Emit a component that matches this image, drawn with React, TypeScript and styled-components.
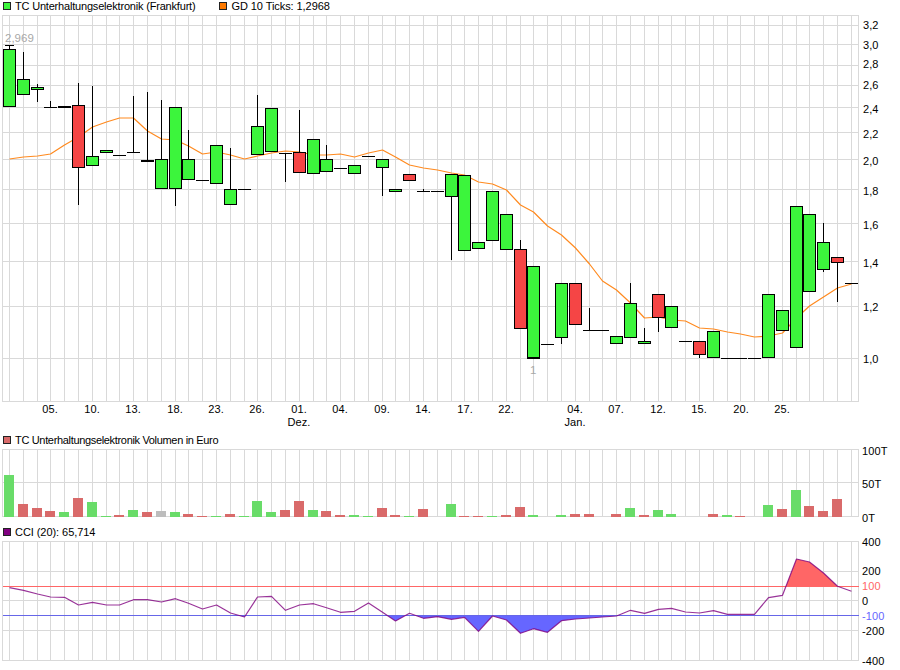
import React from "react";
import styled, { createGlobalStyle } from "styled-components";

const GlobalStyle = createGlobalStyle`
  html, body { margin: 0; padding: 0; background: #fff; }
  body { font-family: "Liberation Sans", Arial, sans-serif; }
`;

const Page = styled.div`
  width: 900px;
  height: 670px;
  display: flex;
  flex-direction: column;
  background: #fff;
  overflow: hidden;
`;

const LegendRow = styled.div<{ $height: number; $top: number }>`
  height: ${(p) => p.$height}px;
  box-sizing: border-box;
  padding: ${(p) => p.$top}px 0 0 3px;
  display: flex;
  align-items: flex-start;
  gap: 24px;
  flex: none;
`;

const LegendItem = styled.div`
  display: flex;
  align-items: center;
  gap: 4px;
`;

const Swatch = styled.span<{ $color: string }>`
  width: 8px;
  height: 8px;
  box-sizing: border-box;
  background: ${(p) => p.$color};
  border: 1px solid #222;
  flex: none;
`;

const LegendLabel = styled.span<{ $spacing: number }>`
  font-size: 11px;
  line-height: 12px;
  letter-spacing: ${(p) => p.$spacing}px;
  color: #000;
  white-space: nowrap;
`;

const ChartSvg = styled.svg`
  display: block;
  flex: none;
  overflow: visible;
`;

const GridLine = styled.line`
  stroke: #d9d9d9;
  stroke-width: 1;
  shape-rendering: crispEdges;
`;

const LevelLine = styled.line<{ $color: string }>`
  stroke: ${(p) => p.$color};
  stroke-width: 1;
  shape-rendering: crispEdges;
`;

const Wick = styled.line<{ $w?: number }>`
  stroke: #000;
  stroke-width: ${(p) => p.$w ?? 1};
  shape-rendering: crispEdges;
`;

const Body = styled.rect<{ $color: string }>`
  fill: ${(p) => p.$color};
  stroke: #000;
  stroke-width: 1;
  shape-rendering: crispEdges;
`;

const VolumeBar = styled.rect<{ $color: string }>`
  fill: ${(p) => p.$color};
  shape-rendering: crispEdges;
`;

const TrendLine = styled.polyline<{ $color: string; $opacity?: number }>`
  fill: none;
  stroke: ${(p) => p.$color};
  stroke-width: 1.2;
  stroke-opacity: ${(p) => p.$opacity ?? 1};
  stroke-linejoin: round;
`;

const AreaFill = styled.path<{ $color: string }>`
  fill: ${(p) => p.$color};
  stroke: none;
`;

const AxisText = styled.text<{ $color?: string }>`
  font-family: "Liberation Sans", Arial, sans-serif;
  font-size: 11px;
  letter-spacing: 0.1px;
  fill: ${(p) => p.$color ?? "#000"};
`;

const NoteText = styled.text`
  font-family: "Liberation Sans", Arial, sans-serif;
  font-size: 11.5px;
  fill: #a8a8a8;
`;

const GREEN = "#3cf53c";
const RED = "#f54545";
const LEFT = 2.5;
const RIGHT = 858.5;
const gx = (i: number) => Math.floor(9.5 + 13.8 * i) + 0.5;
const SLOTS = Array.from({ length: 62 }, (_, i) => i);

type Candle = { i: number; c: "g" | "r" | "d"; t: number; b: number; wt?: number; wb?: number; thick?: boolean };

const candles: Candle[] = [
  { i: 0, c: "g", t: 49, b: 107, wt: 45 },
  { i: 1, c: "g", t: 79, b: 95, wt: 52 },
  { i: 2, c: "g", t: 87, b: 90, wt: 84, wb: 102 },
  { i: 3, c: "d", t: 107, b: 107, wt: 101 },
  { i: 4, c: "d", t: 106, b: 106, thick: true },
  { i: 5, c: "r", t: 105, b: 168, wt: 83, wb: 205 },
  { i: 6, c: "g", t: 156, b: 166, wt: 86 },
  { i: 7, c: "g", t: 150, b: 153 },
  { i: 8, c: "d", t: 155, b: 155 },
  { i: 9, c: "d", t: 152, b: 152, wt: 96 },
  { i: 10, c: "d", t: 160, b: 160, wt: 92, thick: true },
  { i: 11, c: "g", t: 159, b: 189, wt: 100 },
  { i: 12, c: "g", t: 107, b: 189, wb: 206 },
  { i: 13, c: "g", t: 159, b: 180, wt: 130 },
  { i: 14, c: "d", t: 180, b: 180 },
  { i: 15, c: "g", t: 145, b: 184 },
  { i: 16, c: "g", t: 189, b: 205, wt: 148 },
  { i: 17, c: "d", t: 189, b: 189 },
  { i: 18, c: "g", t: 126, b: 155, wt: 95 },
  { i: 19, c: "g", t: 108, b: 152 },
  { i: 20, c: "d", t: 153, b: 153, wb: 182 },
  { i: 21, c: "r", t: 152, b: 173, wt: 110 },
  { i: 22, c: "g", t: 139, b: 174 },
  { i: 23, c: "g", t: 159, b: 172, wt: 145 },
  { i: 24, c: "d", t: 168, b: 168 },
  { i: 25, c: "g", t: 165, b: 174 },
  { i: 26, c: "d", t: 156, b: 156 },
  { i: 27, c: "g", t: 159, b: 168, wb: 196 },
  { i: 28, c: "g", t: 189, b: 192 },
  { i: 29, c: "r", t: 174, b: 181 },
  { i: 30, c: "d", t: 191, b: 191, wt: 189 },
  { i: 31, c: "d", t: 191, b: 191 },
  { i: 32, c: "g", t: 174, b: 197, wb: 260 },
  { i: 33, c: "g", t: 175, b: 251 },
  { i: 34, c: "g", t: 242, b: 249 },
  { i: 35, c: "g", t: 191, b: 241 },
  { i: 36, c: "g", t: 214, b: 250 },
  { i: 37, c: "r", t: 249, b: 329, wt: 240 },
  { i: 38, c: "g", t: 266, b: 359 },
  { i: 39, c: "d", t: 344, b: 344 },
  { i: 40, c: "g", t: 283, b: 338, wb: 344 },
  { i: 41, c: "r", t: 283, b: 325 },
  { i: 42, c: "d", t: 330, b: 330, wt: 308 },
  { i: 43, c: "d", t: 330, b: 330 },
  { i: 44, c: "g", t: 336, b: 344 },
  { i: 45, c: "g", t: 303, b: 338, wt: 283 },
  { i: 46, c: "g", t: 341, b: 344, wt: 328 },
  { i: 47, c: "r", t: 294, b: 318, wb: 332 },
  { i: 48, c: "g", t: 306, b: 328 },
  { i: 49, c: "d", t: 341, b: 341 },
  { i: 50, c: "r", t: 341, b: 355, wb: 358 },
  { i: 51, c: "g", t: 331, b: 358 },
  { i: 52, c: "d", t: 358, b: 358 },
  { i: 53, c: "d", t: 358, b: 358 },
  { i: 54, c: "d", t: 358, b: 358 },
  { i: 55, c: "g", t: 294, b: 358 },
  { i: 56, c: "g", t: 310, b: 331 },
  { i: 57, c: "g", t: 206, b: 348 },
  { i: 58, c: "g", t: 214, b: 292 },
  { i: 59, c: "g", t: 242, b: 270, wt: 223, wb: 272 },
  { i: 60, c: "r", t: 257, b: 263, wb: 302 },
  { i: 61, c: "d", t: 283, b: 283 },
];

const ma = [
  159, 157, 156, 154, 145, 137, 127, 122, 118, 118, 131, 139, 140, 146, 154, 152, 155, 159, 156, 153, 151, 152,
  155, 155, 154, 157, 153, 150, 157, 165, 168, 170, 173, 175, 182, 184, 190, 205, 212, 226, 235, 248, 264, 281,
  290, 303, 318, 317, 320, 321, 328, 329, 332, 334, 337, 336, 333, 318, 306, 297, 288, 284,
];

const volumes: [number, "g" | "r" | "x"][] = [
  [135, "g"], [222, "r"], [234, "r"], [243, "r"], [246, "g"], [204, "r"], [216, "g"], [258, "g"], [255, "r"],
  [240, "g"], [246, "r"], [243, "x"], [246, "g"], [252, "r"], [258, "r"], [258, "g"], [252, "r"], [258, "g"],
  [213, "g"], [246, "g"], [240, "r"], [213, "r"], [240, "g"], [243, "r"], [255, "r"], [255, "g"], [258, "g"],
  [234, "r"], [255, "r"], [258, "g"], [237, "r"], [261, "g"], [222, "g"], [258, "r"], [258, "r"], [258, "g"],
  [255, "r"], [231, "r"], [255, "g"], [261, "g"], [255, "g"], [252, "r"], [252, "r"], [261, "g"], [252, "r"],
  [234, "g"], [255, "r"], [240, "g"], [252, "g"], [261, "g"], [261, "g"], [252, "r"], [255, "g"], [258, "r"],
  [261, "g"], [225, "g"], [237, "r"], [180, "g"], [228, "r"], [243, "r"], [207, "r"], [261, "g"],
];

const cci3x = [
  473, 481, 492, 501, 502, 525, 517, 525, 525, 509, 509, 516, 506, 520, 537, 525, 549, 561, 501, 499, 541, 525,
  521, 533, 547, 544, 519, 547, 573, 550, 565, 560, 568, 562, 604, 558, 570, 610, 596, 607, 572, 567, 564, 561,
  558, 541, 550, 538, 535, 546, 549, 542, 553, 553, 553, 503, 496, 387, 396, 429, 469, 484,
];
const cciY = (v: number) => 430 + v / 3;
const cciPoints = cci3x.map((v, i) => `${gx(i)},${cciY(v).toFixed(1)}`).join(" ");

const priceH = [25, 44, 65, 85, 107, 132, 159, 189, 223, 261, 306, 358];
const priceLabels: [string, number][] = [
  ["3,2", 24], ["3,0", 44], ["2,8", 63], ["2,6", 84], ["2,4", 108], ["2,2", 133],
  ["2,0", 160], ["1,8", 190], ["1,6", 224], ["1,4", 262], ["1,2", 306], ["1,0", 358],
];
const dateLabels: [string, number, string?][] = [
  ["05.", 50], ["10.", 92], ["13.", 133], ["18.", 175], ["23.", 216], ["26.", 257], ["01.", 299, "Dez."],
  ["04.", 340], ["09.", 382], ["14.", 423], ["17.", 465], ["22.", 506], ["04.", 575, "Jan."], ["07.", 616],
  ["12.", 658], ["15.", 699], ["20.", 741], ["25.", 782],
];
const cciLabels: [string, number, string?][] = [
  ["400", 542], ["200", 571], ["100", 586, "#ff6666"], ["0", 601], ["-100", 615.5, "#6666ff"], ["-200", 631], ["-400", 661],
];

const VGrid = ({ top, bottom }: { top: number; bottom: number }) => (
  <>
    <GridLine x1={LEFT} x2={LEFT} y1={top} y2={bottom} />
    <GridLine x1={RIGHT} x2={RIGHT} y1={top} y2={bottom} />
    {SLOTS.map((i) => (
      <GridLine key={i} x1={gx(i)} x2={gx(i)} y1={top} y2={bottom} />
    ))}
  </>
);

const HGrid = ({ ys }: { ys: number[] }) => (
  <>
    {ys.map((y) => (
      <GridLine key={y} x1={LEFT} x2={RIGHT} y1={y + 0.5} y2={y + 0.5} />
    ))}
  </>
);

const CandleMark = ({ d }: { d: Candle }) => {
  const x = gx(d.i);
  if (d.c === "d") {
    const w = d.thick ? 2 : 1;
    return (
      <>
        {d.wt !== undefined && <Wick x1={x} x2={x} y1={d.wt} y2={d.t} />}
        {d.wb !== undefined && <Wick x1={x} x2={x} y1={d.t} y2={d.wb} />}
        <Wick $w={w} x1={x - 6.5} x2={x + 6.5} y1={d.t + 0.5} y2={d.t + 0.5} />
      </>
    );
  }
  return (
    <>
      {d.wt !== undefined && <Wick x1={x} x2={x} y1={d.wt} y2={d.t} />}
      {d.wb !== undefined && <Wick x1={x} x2={x} y1={d.b} y2={d.wb} />}
      <Body $color={d.c === "g" ? GREEN : RED} x={x - 6} y={d.t + 0.5} width={12} height={Math.max(d.b - d.t - 1, 1)} />
    </>
  );
};

const PriceChart = () => (
  <ChartSvg width={900} height={420} viewBox="0 12 900 420">
    <HGrid ys={[15, ...priceH, 401]} />
    <VGrid top={15} bottom={401.5} />
    <TrendLine $color="#ff8a1f" points={ma.map((y, i) => `${gx(i)},${y}`).join(" ")} />
    <Wick x1={5} x2={14} y1={45.5} y2={45.5} />
    {candles.map((d) => (
      <CandleMark key={d.i} d={d} />
    ))}
    <Wick x1={gx(38) - 6} x2={gx(38) + 6} y1={357.5} y2={357.5} />
    <NoteText x={5} y={42}>2,969</NoteText>
    <NoteText x={530} y={374}>1</NoteText>
    {priceLabels.map(([t, y]) => (
      <AxisText key={t} x={863} y={y + 5}>{t}</AxisText>
    ))}
    {dateLabels.map(([t, x, m]) => (
      <React.Fragment key={`${t}${x}`}>
        <AxisText x={x} y={413} textAnchor="middle">{t}</AxisText>
        {m && <AxisText x={x} y={426} textAnchor="middle">{m}</AxisText>}
      </React.Fragment>
    ))}
  </ChartSvg>
);

const volumeColor = { g: "#69dc69", r: "#d96a6a", x: "#bdbdbd" };

const VolumeChart = () => (
  <ChartSvg width={900} height={80} viewBox="0 446 900 80">
    <HGrid ys={[449, 482, 516]} />
    <VGrid top={449} bottom={517} />
    {volumes.map(([v, c], i) =>
      v >= 261 ? null : (
        <VolumeBar key={i} $color={volumeColor[c]} x={gx(i) - 5.5} y={430 + v / 3} width={10} height={517 - (430 + v / 3)} />
      ),
    )}
    <AxisText x={862} y={455}>100T</AxisText>
    <AxisText x={862} y={488}>50T</AxisText>
    <AxisText x={862} y={522}>0T</AxisText>
  </ChartSvg>
);

const CciChart = () => (
  <ChartSvg width={900} height={130} viewBox="0 540 900 130">
    <defs>
      <clipPath id="overbought"><rect x={0} y={500} width={900} height={86.5} /></clipPath>
      <clipPath id="oversold"><rect x={0} y={615.5} width={900} height={60} /></clipPath>
    </defs>
    <HGrid ys={[541, 571, 600, 630, 660]} />
    <VGrid top={541} bottom={660.5} />
    <g clipPath="url(#oversold)">
      <AreaFill $color="#6666ff" d={`M${gx(0)},615.5 L${cciPoints.replace(/ /g, " L")} L${gx(61)},615.5 Z`} />
    </g>
    <g clipPath="url(#overbought)">
      <AreaFill $color="#ff6666" d={`M${gx(0)},586.5 L${cciPoints.replace(/ /g, " L")} L${gx(61)},586.5 Z`} />
    </g>
    <LevelLine $color="#ff6666" x1={LEFT} x2={RIGHT} y1={586.5} y2={586.5} />
    <LevelLine $color="#6666e8" x1={LEFT} x2={RIGHT} y1={615.5} y2={615.5} />
    <TrendLine $color="#800080" $opacity={0.8} points={cciPoints} />
    {cciLabels.map(([t, y, c]) => (
      <AxisText key={t} x={862} y={y + 4} $color={c}>{t}</AxisText>
    ))}
  </ChartSvg>
);

export default function App() {
  return (
    <Page>
      <GlobalStyle />
      <LegendRow $height={12} $top={0}>
        <LegendItem>
          <Swatch $color={GREEN} />
          <LegendLabel $spacing={-0.19}>TC Unterhaltungselektronik (Frankfurt)</LegendLabel>
        </LegendItem>
        <LegendItem>
          <Swatch $color="#ff7a00" />
          <LegendLabel $spacing={-0.07}>GD 10 Ticks: 1,2968</LegendLabel>
        </LegendItem>
      </LegendRow>
      <PriceChart />
      <LegendRow $height={14} $top={2}>
        <LegendItem>
          <Swatch $color="#d96a6a" />
          <LegendLabel $spacing={-0.33}>TC Unterhaltungselektronik Volumen in Euro</LegendLabel>
        </LegendItem>
      </LegendRow>
      <VolumeChart />
      <LegendRow $height={14} $top={0}>
        <LegendItem>
          <Swatch $color="#800080" />
          <LegendLabel $spacing={-0.06}>CCI (20): 65,714</LegendLabel>
        </LegendItem>
      </LegendRow>
      <CciChart />
    </Page>
  );
}
